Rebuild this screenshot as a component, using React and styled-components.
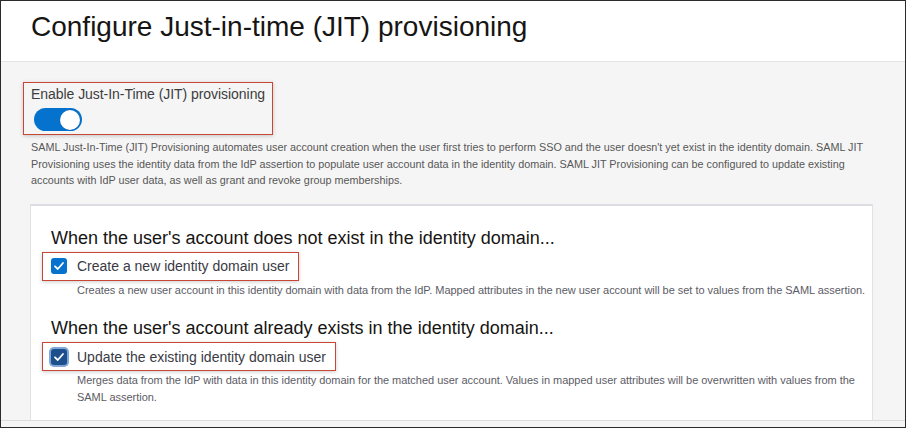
import React from 'react';
import styled, { createGlobalStyle } from 'styled-components';

const Global = createGlobalStyle`
  html, body { margin: 0; padding: 0; background: #fff; }
  body { font-family: "Liberation Sans", Arial, Helvetica, sans-serif; }
  *, *::before, *::after { box-sizing: border-box; }
`;

const Frame = styled.div`
  width: 906px;
  height: 428px;
  border: 1px solid #2b2b2b;
  display: flex;
  flex-direction: column;
  overflow: hidden;
  background: #f5f5f5;
`;

const Header = styled.header`
  flex: none;
  height: 61px;
  background: #fff;
  border-bottom: 1px solid #e4e4e4;
  padding: 10px 0 0 30px;
`;

const Title = styled.h1`
  margin: 0;
  font-size: 28px;
  font-weight: 400;
  line-height: 32px;
  color: #161513;
`;

const Body = styled.main`
  flex: 1;
  min-height: 0;
  overflow: hidden;
  padding: 20px 32px 0 29px;
`;

const Footer = styled.div`
  flex: none;
  height: 7px;
  border-top: 1px solid #dcdcdc;
  background: #f5f5f5;
`;

const Highlight = styled.div`
  display: flex;
  width: fit-content;
  border: 1px solid #c74634;
  box-shadow: 0 1px 4px rgba(0, 0, 0, 0.2);
  flex-direction: ${(p) => (p.$column ? 'column' : 'row')};
  align-items: ${(p) => (p.$column ? 'flex-start' : 'center')};
  margin: ${(p) => p.$margin};
  padding: ${(p) => p.$padding};
  height: ${(p) => (p.$height ? `${p.$height}px` : 'auto')};
  gap: ${(p) => p.$gap || 0}px;
`;

const SwitchLabel = styled.div`
  font-size: 14px;
  line-height: 16px;
  color: #3d3d3d;
  letter-spacing: -0.05px;
`;

const Track = styled.div`
  margin: 6px 0 0 3px;
  width: 48px;
  height: 23px;
  border-radius: 12px;
  background: #0572ce;
  display: flex;
  align-items: center;
  justify-content: flex-end;
  padding: 0 2px;
`;

const Knob = styled.div`
  width: 20px;
  height: 20px;
  border-radius: 50%;
  background: #fff;
  box-shadow: 0 0 1px rgba(0, 0, 0, 0.3);
`;

const Description = styled.p`
  margin: 4px 0 0 1px;
  font-size: 10.8px;
  line-height: 16.5px;
  color: #575757;
`;

const Card = styled.section`
  margin-top: 15px;
  min-height: 260px;
  background: #fff;
  border: 1px solid #e2e2e2;
  border-top: 2px solid #dcdce2;
  padding: 21px 0 0 20px;
`;

const Heading = styled.h2`
  margin: ${(p) => (p.$first ? '0' : '19px 0 0')};
  font-size: 18px;
  font-weight: 400;
  line-height: 22px;
  color: #161513;
`;

const Box = styled.span`
  flex: none;
  width: 16px;
  height: 16px;
  border-radius: 3px;
  display: flex;
  align-items: center;
  justify-content: center;
  background: ${(p) => (p.$focused ? '#1c4f8c' : '#0572ce')};
  box-shadow: ${(p) => (p.$focused ? '0 0 0 2px #7fa7d9' : 'none')};
`;

const OptionLabel = styled.span`
  font-size: 14px;
  line-height: 18px;
  color: #3a3a44;
`;

const Help = styled.p`
  margin: 1px 0 0 26px;
  font-size: 11px;
  line-height: 16.5px;
  letter-spacing: -0.03px;
  color: #5c5c66;
`;

function CheckMark() {
  return (
    <svg width="12" height="12" viewBox="0 0 12 12" aria-hidden="true">
      <polyline
        points="2 6.3 4.8 9 10 3"
        fill="none"
        stroke="#fff"
        strokeWidth="1.8"
        strokeLinecap="round"
        strokeLinejoin="round"
      />
    </svg>
  );
}

function Option({ label, focused }) {
  return (
    <Highlight $margin="3px 0 0 -9px" $padding="0 9px 0 8px" $height={29} $gap={10}>
      <Box $focused={focused}>
        <CheckMark />
      </Box>
      <OptionLabel>{label}</OptionLabel>
    </Highlight>
  );
}

export default function App() {
  return (
    <>
      <Global />
      <Frame>
        <Header>
          <Title>Configure Just-in-time (JIT) provisioning</Title>
        </Header>
        <Body>
          <Highlight $column $margin="0 0 0 -7px" $padding="3px 7px 3px 7px">
            <SwitchLabel>Enable Just-In-Time (JIT) provisioning</SwitchLabel>
            <Track>
              <Knob />
            </Track>
          </Highlight>
          <Description>
            SAML Just-In-Time (JIT) Provisioning automates user account creation when the user first tries to
            perform SSO and the user doesn't yet exist in the identity domain. SAML JIT Provisioning uses the
            identity data from the IdP assertion to populate user account data in the identity domain. SAML JIT
            Provisioning can be configured to update existing accounts with IdP user data, as well as grant and
            revoke group memberships.
          </Description>
          <Card>
            <Heading $first>When the user's account does not exist in the identity domain...</Heading>
            <Option label="Create a new identity domain user" />
            <Help>
              Creates a new user account in this identity domain with data from the IdP. Mapped attributes in the
              new user account will be set to values from the SAML assertion.
            </Help>
            <Heading>When the user's account already exists in the identity domain...</Heading>
            <Option label="Update the existing identity domain user" focused />
            <Help>
              Merges data from the IdP with data in this identity domain for the matched user account. Values in
              mapped user attributes will be overwritten with values from the SAML assertion.
            </Help>
          </Card>
        </Body>
        <Footer />
      </Frame>
    </>
  );
}
